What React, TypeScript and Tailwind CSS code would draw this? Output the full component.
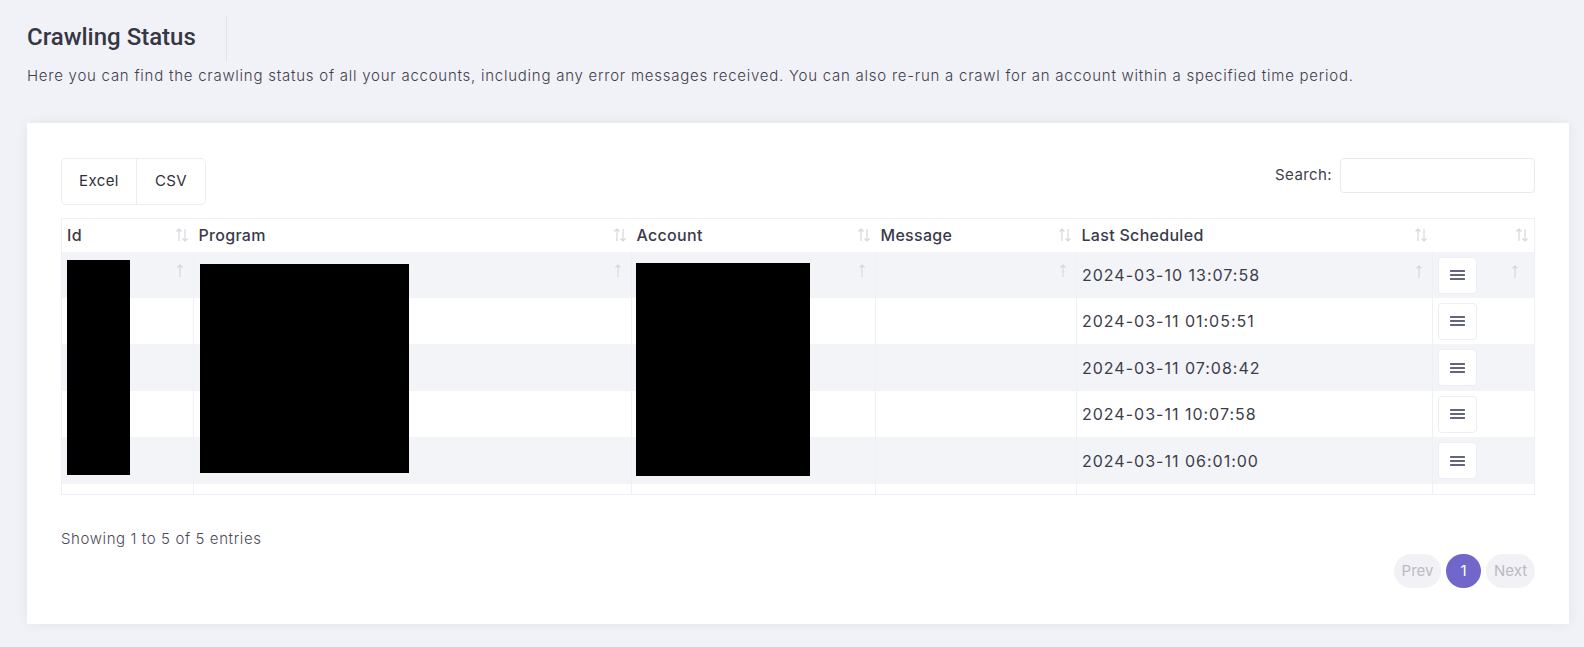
import React from "react";

const rows = [
  { date: "2024-03-10 13:07:58", h: "h-[46px]" },
  { date: "2024-03-11 01:05:51", h: "h-[46px]" },
  { date: "2024-03-11 07:08:42", h: "h-[47px]" },
  { date: "2024-03-11 10:07:58", h: "h-[46px]" },
  { date: "2024-03-11 06:01:00", h: "h-[47px]" },
];

const cols = [
  { label: "Id", w: "w-[132px]" },
  { label: "Program", w: "w-[438px]" },
  { label: "Account", w: "w-[244px]" },
  { label: "Message", w: "w-[201px]" },
  { label: "Last Scheduled", w: "w-[356px]" },
  { label: "", w: "w-[102px]" },
];

function SortBoth() {
  return (
    <svg width="14" height="16" viewBox="0 0 14 16" className="text-[#d6d7de]" fill="none" stroke="currentColor" strokeWidth="1.2">
      <path d="M4 14V2M1.5 4.5L4 2l2.5 2.5" />
      <path d="M10 2v12M7.5 11.5L10 14l2.5-2.5" />
    </svg>
  );
}

function SortUp() {
  return (
    <svg width="8" height="16" viewBox="0 0 8 16" className="text-[#d6d7de]" fill="none" stroke="currentColor" strokeWidth="1.2">
      <path d="M4 14V2M1.5 4.5L4 2l2.5 2.5" />
    </svg>
  );
}

function Burger() {
  return (
    <svg width="15" height="12" viewBox="0 0 15 12" fill="#62667a">
      <rect x="0" y="1" width="15" height="2" rx="0.5" />
      <rect x="0" y="5" width="15" height="2" rx="0.5" />
      <rect x="0" y="9" width="15" height="2" rx="0.5" />
    </svg>
  );
}

export default function App() {
  return (
    <div className="h-[647px] overflow-hidden bg-[#f1f2f7] pl-[27px] pt-4 font-['Inter',sans-serif] text-[#3d3e4c]">
      <div className="flex">
        <h1 className="border-r border-[#e1e2e8] pr-[30px] pt-[10px] pb-[13px] font-['Roboto',sans-serif] text-[24px] font-medium leading-[23px] text-[#363744]">
          Crawling Status
        </h1>
      </div>
      <p className="mt-[3px] text-[15px] font-light tracking-[0.75px] text-[#3f404c]">
        Here you can find the crawling status of all your accounts, including any error messages received. You can also re-run a crawl for an account within a specified time period.
      </p>

      <div className="mt-[35px] w-[1542px] bg-white px-[34px] pt-[35px] pb-[36px] shadow-[0_0_12px_rgba(30,30,60,0.06)]">
        <div className="flex items-start justify-between">
          <div className="flex h-[47px] rounded-[5px] border border-[#ececf2] text-[15px] tracking-[0.4px] text-[#2f303c]">
            <button className="w-[75px] border-r border-[#ececf2]">Excel</button>
            <button className="w-[68px]">CSV</button>
          </div>
          <label className="flex items-center gap-2 text-[15px] tracking-[0.4px] text-[#3f404c]">
            Search:
            <input className="h-[35px] w-[195px] rounded-[4px] border border-[#e8e9ef] outline-none" />
          </label>
        </div>

        <div className="relative mt-[13px]">
          <table className="w-[1473px] table-fixed border-collapse border border-[#eff0f5] text-[16px] tracking-[0.3px]">
            <thead>
              <tr className="h-[34px]">
                {cols.map((c, i) => (
                  <th key={i} className={`${c.w} px-[5px] text-left font-medium text-[#3a3b49]`}>
                    <div className="flex items-center justify-between">
                      <span>{c.label}</span>
                      <SortBoth />
                    </div>
                  </th>
                ))}
              </tr>
            </thead>
            <tbody>
              {rows.map((row, r) => (
                <tr key={r} className={`${row.h} ${r % 2 === 0 ? "bg-[#f3f4f8]" : "bg-white"}`}>
                  {cols.map((c, i) => (
                    <td key={i} className="border-l border-[#eff0f5] px-[5px] align-middle first:border-l-0">
                      {i === 4 && (
                        <div className="flex items-center justify-between">
                          <span className="tracking-[1px] text-[#3c3d4a]">{row.date}</span>
                          {r === 0 && <div className="-mt-[6px] mr-[4px]"><SortUp /></div>}
                        </div>
                      )}
                      {i === 5 && (
                        <div className="flex items-center justify-between">
                          <button className="flex h-[37px] w-[39px] items-center justify-center rounded-[4px] border border-[#eceef3] bg-white">
                            <Burger />
                          </button>
                          {r === 0 && <div className="-mt-[6px] mr-[10px]"><SortUp /></div>}
                        </div>
                      )}
                      {i < 4 && r === 0 && (
                        <div className="flex justify-end pr-[4px] -mt-[8px]">
                          <SortUp />
                        </div>
                      )}
                    </td>
                  ))}
                </tr>
              ))}
              <tr className="h-[10px] bg-white">
                {cols.map((c, i) => (
                  <td key={i} className="border-l border-[#eff0f5] first:border-l-0" />
                ))}
              </tr>
            </tbody>
          </table>
          <div className="absolute left-[6px] top-[42px] h-[215px] w-[63px] bg-black" />
          <div className="absolute left-[139px] top-[46px] h-[209px] w-[209px] bg-black" />
          <div className="absolute left-[575px] top-[45px] h-[213px] w-[174px] bg-black" />
        </div>

        <p className="mt-[33px] text-[15px] font-light tracking-[0.6px] text-[#4a4b57]">Showing 1 to 5 of 5 entries</p>

        <div className="mt-[4px] flex justify-end gap-[5px] text-[15px]">
          <span className="flex h-[34px] w-[47px] items-center justify-center rounded-full bg-[#f2f2f6] text-[#b9bac4]">Prev</span>
          <span className="flex h-[34px] w-[35px] items-center justify-center rounded-full bg-[#7166c9] text-white">1</span>
          <span className="flex h-[34px] w-[49px] items-center justify-center rounded-full bg-[#f2f2f6] text-[#b9bac4]">Next</span>
        </div>
      </div>
    </div>
  );
}
